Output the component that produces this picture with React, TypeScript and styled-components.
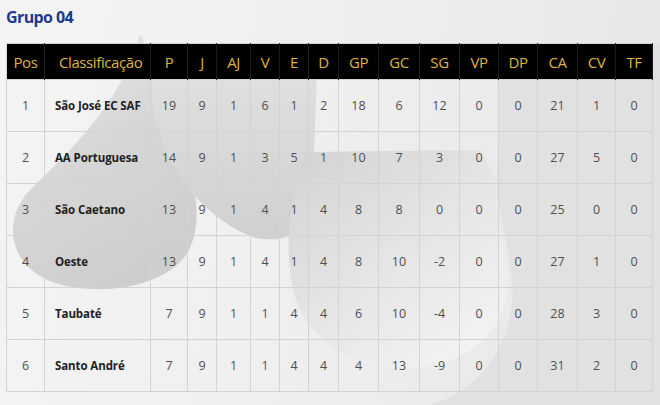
import styled, { createGlobalStyle } from "styled-components";

type Row = {
  pos: number;
  team: string;
  stats: number[];
};

const columns = ["P", "J", "AJ", "V", "E", "D", "GP", "GC", "SG", "VP", "DP", "CA", "CV", "TF"];
const widths = [38, 106, 37, 29, 34, 29, 29, 30, 40, 41, 40, 39, 39, 40, 38, 37];

const rows: Row[] = [
  { pos: 1, team: "São José EC SAF", stats: [19, 9, 1, 6, 1, 2, 18, 6, 12, 0, 0, 21, 1, 0] },
  { pos: 2, team: "AA Portuguesa", stats: [14, 9, 1, 3, 5, 1, 10, 7, 3, 0, 0, 27, 5, 0] },
  { pos: 3, team: "São Caetano", stats: [13, 9, 1, 4, 1, 4, 8, 8, 0, 0, 0, 25, 0, 0] },
  { pos: 4, team: "Oeste", stats: [13, 9, 1, 4, 1, 4, 8, 10, -2, 0, 0, 27, 1, 0] },
  { pos: 5, team: "Taubaté", stats: [7, 9, 1, 1, 4, 4, 6, 10, -4, 0, 0, 28, 3, 0] },
  { pos: 6, team: "Santo André", stats: [7, 9, 1, 1, 4, 4, 4, 13, -9, 0, 0, 31, 2, 0] },
];

// soft grey shapes of the page background
const Backdrop = () => (
  <Decor viewBox="0 0 660 405" preserveAspectRatio="none">
    <defs>
      <linearGradient id="blobA" x1="0" y1="0" x2="0.5" y2="1">
        <stop offset="0" stopColor="#ececec" />
        <stop offset="0.55" stopColor="#d6d6d6" />
        <stop offset="1" stopColor="#cecece" />
      </linearGradient>
      <linearGradient id="blobB" x1="0" y1="0" x2="0" y2="1">
        <stop offset="0" stopColor="#e2e2e2" />
        <stop offset="1" stopColor="#d0d0d0" />
      </linearGradient>
      <linearGradient id="blobC" x1="0" y1="0" x2="0.8" y2="1">
        <stop offset="0" stopColor="#d2d2d2" />
        <stop offset="0.5" stopColor="#e4e4e4" />
        <stop offset="1" stopColor="#f3f3f3" />
      </linearGradient>
    </defs>
    <path
      d="M500 43 L 660 43 L 660 405 L 430 405 C 488 388, 516 335, 512 282 C 508 236, 494 200, 497 180 Z"
      fill="#e1e1e1"
    />
    <path
      d="M139 36 C 122 105, 62 158, 28 192 C 2 222, 8 268, 58 284 C 100 296, 166 288, 188 252 C 204 222, 196 180, 178 136 C 165 102, 150 70, 142 36 Z"
      fill="url(#blobA)"
    />
    <path
      d="M152 43 L 152 100 C 160 158, 194 212, 250 236 C 282 246, 304 232, 312 214 L 318 43 Z"
      fill="url(#blobB)"
    />
    <path
      d="M298 180 L 306 152 L 480 150 L 497 180 C 490 195, 504 225, 508 270 C 512 322, 478 362, 418 367 C 360 370, 312 345, 296 300 C 284 262, 288 210, 298 180 Z"
      fill="url(#blobC)"
    />
  </Decor>
);

export default function App() {
  return (
    <Page>
      <GlobalStyle />
      <Backdrop />
      <Title>Grupo 04</Title>
      <Table>
        <colgroup>
          {widths.map((w, i) => (
            <col key={i} style={{ width: w }} />
          ))}
        </colgroup>
        <thead>
          <tr>
            <HeadCell>Pos</HeadCell>
            <HeadCell $left>Classificação</HeadCell>
            {columns.map((c) => (
              <HeadCell key={c}>{c}</HeadCell>
            ))}
          </tr>
        </thead>
        <tbody>
          {rows.map((r) => (
            <tr key={r.pos}>
              <Cell>{r.pos}</Cell>
              <TeamCell>{r.team}</TeamCell>
              {r.stats.map((s, i) => (
                <Cell key={i}>{s}</Cell>
              ))}
            </tr>
          ))}
        </tbody>
      </Table>
    </Page>
  );
}

const GlobalStyle = createGlobalStyle`
  html, body {
    margin: 0;
    padding: 0;
  }
  body {
    font-family: "Open Sans", "Liberation Sans", sans-serif;
    background: #ececec;
  }
`;

const Page = styled.div`
  position: relative;
  width: 660px;
  height: 405px;
  box-sizing: border-box;
  padding: 6px 8px 0 6px;
  overflow: hidden;
  background: linear-gradient(100deg, #f4f4f4 0%, #efefef 45%, #e6e6e6 100%);
`;

const Decor = styled.svg`
  position: absolute;
  inset: 0;
  width: 660px;
  height: 405px;
  z-index: 0;
`;

const Title = styled.h3`
  position: relative;
  z-index: 1;
  margin: 0 0 14px;
  height: 23px;
  font-size: 16px;
  line-height: 23px;
  font-weight: 700;
  color: #1e3b8e;
  letter-spacing: -0.6px;
`;

const Table = styled.table`
  position: relative;
  z-index: 1;
  width: 646px;
  table-layout: fixed;
  border-collapse: collapse;
  border: 1px solid #d3d3d3;
`;

const HeadCell = styled.th<{ $left?: boolean }>`
  height: 35px;
  padding: 0;
  background: #000;
  color: #dcb440;
  font-size: 15px;
  font-weight: 400;
  letter-spacing: -0.4px;
  text-align: ${({ $left }) => ($left ? "left" : "center")};
  padding-left: ${({ $left }) => ($left ? "14px" : "0")};
  border-right: 1px solid #1c1c1c;
  white-space: nowrap;
`;

const Cell = styled.td`
  height: 51px;
  padding: 0;
  text-align: center;
  font-size: 12.5px;
  color: #4f4f4f;
  border: 1px solid #d3d3d3;
`;

const TeamCell = styled(Cell)`
  text-align: left;
  padding-left: 10px;
  font-weight: 700;
  font-size: 11.5px;
  color: #222;
  letter-spacing: -0.1px;
  white-space: nowrap;
`;
